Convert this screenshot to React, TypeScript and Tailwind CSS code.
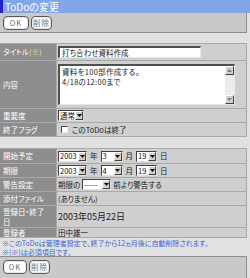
import React from "react";

function Btn({ children, w }: { children: React.ReactNode; w: string }) {
  return (
    <div
      className={`${w} h-[14px] rounded-[4px] border border-[#5a5a5a] bg-white shadow-[inset_0_0_0_1px_#e8e8e8] flex items-center justify-center text-[7.5px] text-[#6a6a6a] tracking-[1px]`}
    >
      {children}
    </div>
  );
}

function Arrow() {
  return (
    <div className="w-[8px] h-full bg-[#d4d0c8] border-t border-l border-t-white border-l-white border-b border-r border-b-[#404040] border-r-[#404040] flex items-center justify-center">
      <svg width="5" height="3" viewBox="0 0 5 3">
        <path d="M0 0 H5 L2.5 3 Z" fill="#000" />
      </svg>
    </div>
  );
}

function Select({ value, w }: { value: string; w: string }) {
  return (
    <div
      className={`${w} h-[11px] bg-white border-t border-l border-t-[#404040] border-l-[#404040] border-b border-r border-b-[#e0e0e0] border-r-[#e0e0e0] flex items-stretch`}
    >
      <div className="flex-1 pl-[1px] flex items-center text-[7.5px] text-[#111]">{value}</div>
      <Arrow />
    </div>
  );
}

function Row({
  label,
  h,
  children,
}: {
  label: React.ReactNode;
  h: string;
  children?: React.ReactNode;
}) {
  return (
    <>
      <div className={`${h} bg-[#8d8d8d] flex items-center pl-[3px] text-[7.5px] text-white leading-[10px]`}>
        {label}
      </div>
      <div className={`${h} bg-[#cfcfcf] flex items-center pl-[1px] text-[7.5px] text-[#1a1a1a]`}>
        {children}
      </div>
    </>
  );
}

export default function App() {
  return (
    <div className="w-[250px] h-[278px] bg-[#e1e1e1] overflow-hidden flex flex-col [font-family:'Noto_Sans_CJK_JP',sans-serif] [font-feature-settings:'palt'] leading-none">
      {/* title bar */}
      <div className="h-[13px] shrink-0 bg-[#82a7e8] border-l-[3px] border-l-[#2222c8] flex items-center pl-[2px] text-white text-[10px]">
        ToDoの変更
      </div>
      {/* top buttons */}
      <div className="w-[247px] h-[20px] shrink-0 bg-[#c9c9c9] border-b border-r border-[#8e8e8e] flex items-center gap-[2px] pl-[3px]">
        <Btn w="w-[26px]">OK</Btn>
        <Btn w="w-[21px]">削除</Btn>
      </div>
      <div className="h-[10px] shrink-0" />

      {/* table 1 */}
      <div className="w-[247px] shrink-0 grid grid-cols-[56px_1fr] gap-px bg-[#a9a9a9] border border-[#a9a9a9] border-l-0">
        <Row
          h="h-[16px]"
          label={
            <span>
              タイトル<span className="text-[#ece46a]">(※)</span>
            </span>
          }
        >
          <div className="w-[143px] h-[12px] bg-white border-t-2 border-l-2 border-t-[#505050] border-l-[#505050] border-b border-r border-b-[#e8e8e8] border-r-[#e8e8e8] flex items-center pl-[2px] text-[7.5px]">
            打ち合わせ資料作成
          </div>
        </Row>
        <Row h="h-[47px]" label="内容">
          <div className="w-[177px] h-[41px] bg-white border-t-2 border-l-2 border-t-[#505050] border-l-[#505050] border-b border-r border-b-[#e8e8e8] border-r-[#e8e8e8] flex">
            <div className="flex-1 pl-[2px] pt-[1px] text-[7.5px] leading-[10px] tracking-[0.3px]">
              <div>資料を100部作成する。</div>
              <div>4/18の12:00まで</div>
            </div>
            <div className="w-[9px] flex flex-col bg-[#ebebeb]">
              <div className="h-[9px] bg-[#d4d0c8] border-t border-l border-t-white border-l-white border-b border-r border-b-[#404040] border-r-[#404040] flex items-center justify-center">
                <svg width="5" height="3" viewBox="0 0 5 3">
                  <path d="M0 3 H5 L2.5 0 Z" fill="#808080" />
                </svg>
              </div>
              <div className="flex-1" />
              <div className="h-[9px] bg-[#d4d0c8] border-t border-l border-t-white border-l-white border-b border-r border-b-[#404040] border-r-[#404040] flex items-center justify-center">
                <svg width="5" height="3" viewBox="0 0 5 3">
                  <path d="M0 0 H5 L2.5 3 Z" fill="#808080" />
                </svg>
              </div>
            </div>
          </div>
        </Row>
        <Row h="h-[13px]" label="重要度">
          <Select w="w-[26px]" value="通常" />
        </Row>
        <Row h="h-[13px]" label="終了フラグ">
          <div className="flex items-center gap-[4px] pl-[3px]">
            <div className="w-[7px] h-[7px] bg-white border-t border-l border-t-[#404040] border-l-[#404040] border-b border-r border-b-[#e8e8e8] border-r-[#e8e8e8]" />
            <span>このToDoは終了</span>
          </div>
        </Row>
      </div>

      <div className="h-[11px] shrink-0" />

      {/* table 2 */}
      <div className="w-[247px] shrink-0 grid grid-cols-[56px_1fr] gap-px bg-[#a9a9a9] border border-[#a9a9a9] border-l-0">
        <Row h="h-[14px]" label="開始予定">
          <div className="flex items-center gap-[3px]">
            <Select w="w-[29px]" value="2003" />
            <span>年</span>
            <Select w="w-[22px]" value="3" />
            <span>月</span>
            <Select w="w-[21px]" value="19" />
            <span>日</span>
          </div>
        </Row>
        <Row h="h-[13px]" label="期限">
          <div className="flex items-center gap-[3px]">
            <Select w="w-[29px]" value="2003" />
            <span>年</span>
            <Select w="w-[22px]" value="4" />
            <span>月</span>
            <Select w="w-[21px]" value="19" />
            <span>日</span>
          </div>
        </Row>
        <Row h="h-[13px]" label="警告設定">
          <div className="flex items-center gap-[2px]">
            <span>期限の</span>
            <Select w="w-[29px]" value="-----" />
            <span>前より警告する</span>
          </div>
        </Row>
        <Row h="h-[13px]" label="添付ファイル">
          <span>(ありません)</span>
        </Row>
        <Row
          h="h-[21px]"
          label={
            <div>
              <div>登録日・終了</div>
              <div>日</div>
            </div>
          }
        >
          <span className="text-[9px] text-[#222]">2003年05月22日</span>
        </Row>
        <Row h="h-[9px]" label="登録者">
          <span>田中雄一</span>
        </Row>
      </div>

      {/* notes */}
      <div className="h-[18px] shrink-0 pl-[2px] pt-[1px] text-[7px] leading-[8.5px] text-[#3a66d2]">
        <div>※このToDoは管理者設定で、終了から12ヵ月後に自動削除されます。</div>
        <div>※(※)は必須項目です。</div>
      </div>

      {/* bottom buttons */}
      <div className="w-[247px] flex-1 bg-[#c9c9c9] border-t border-r border-[#8e8e8e] flex items-start pt-[3px] gap-[2px] pl-[3px]">
        <Btn w="w-[24px]">OK</Btn>
        <Btn w="w-[21px]">削除</Btn>
      </div>
    </div>
  );
}
